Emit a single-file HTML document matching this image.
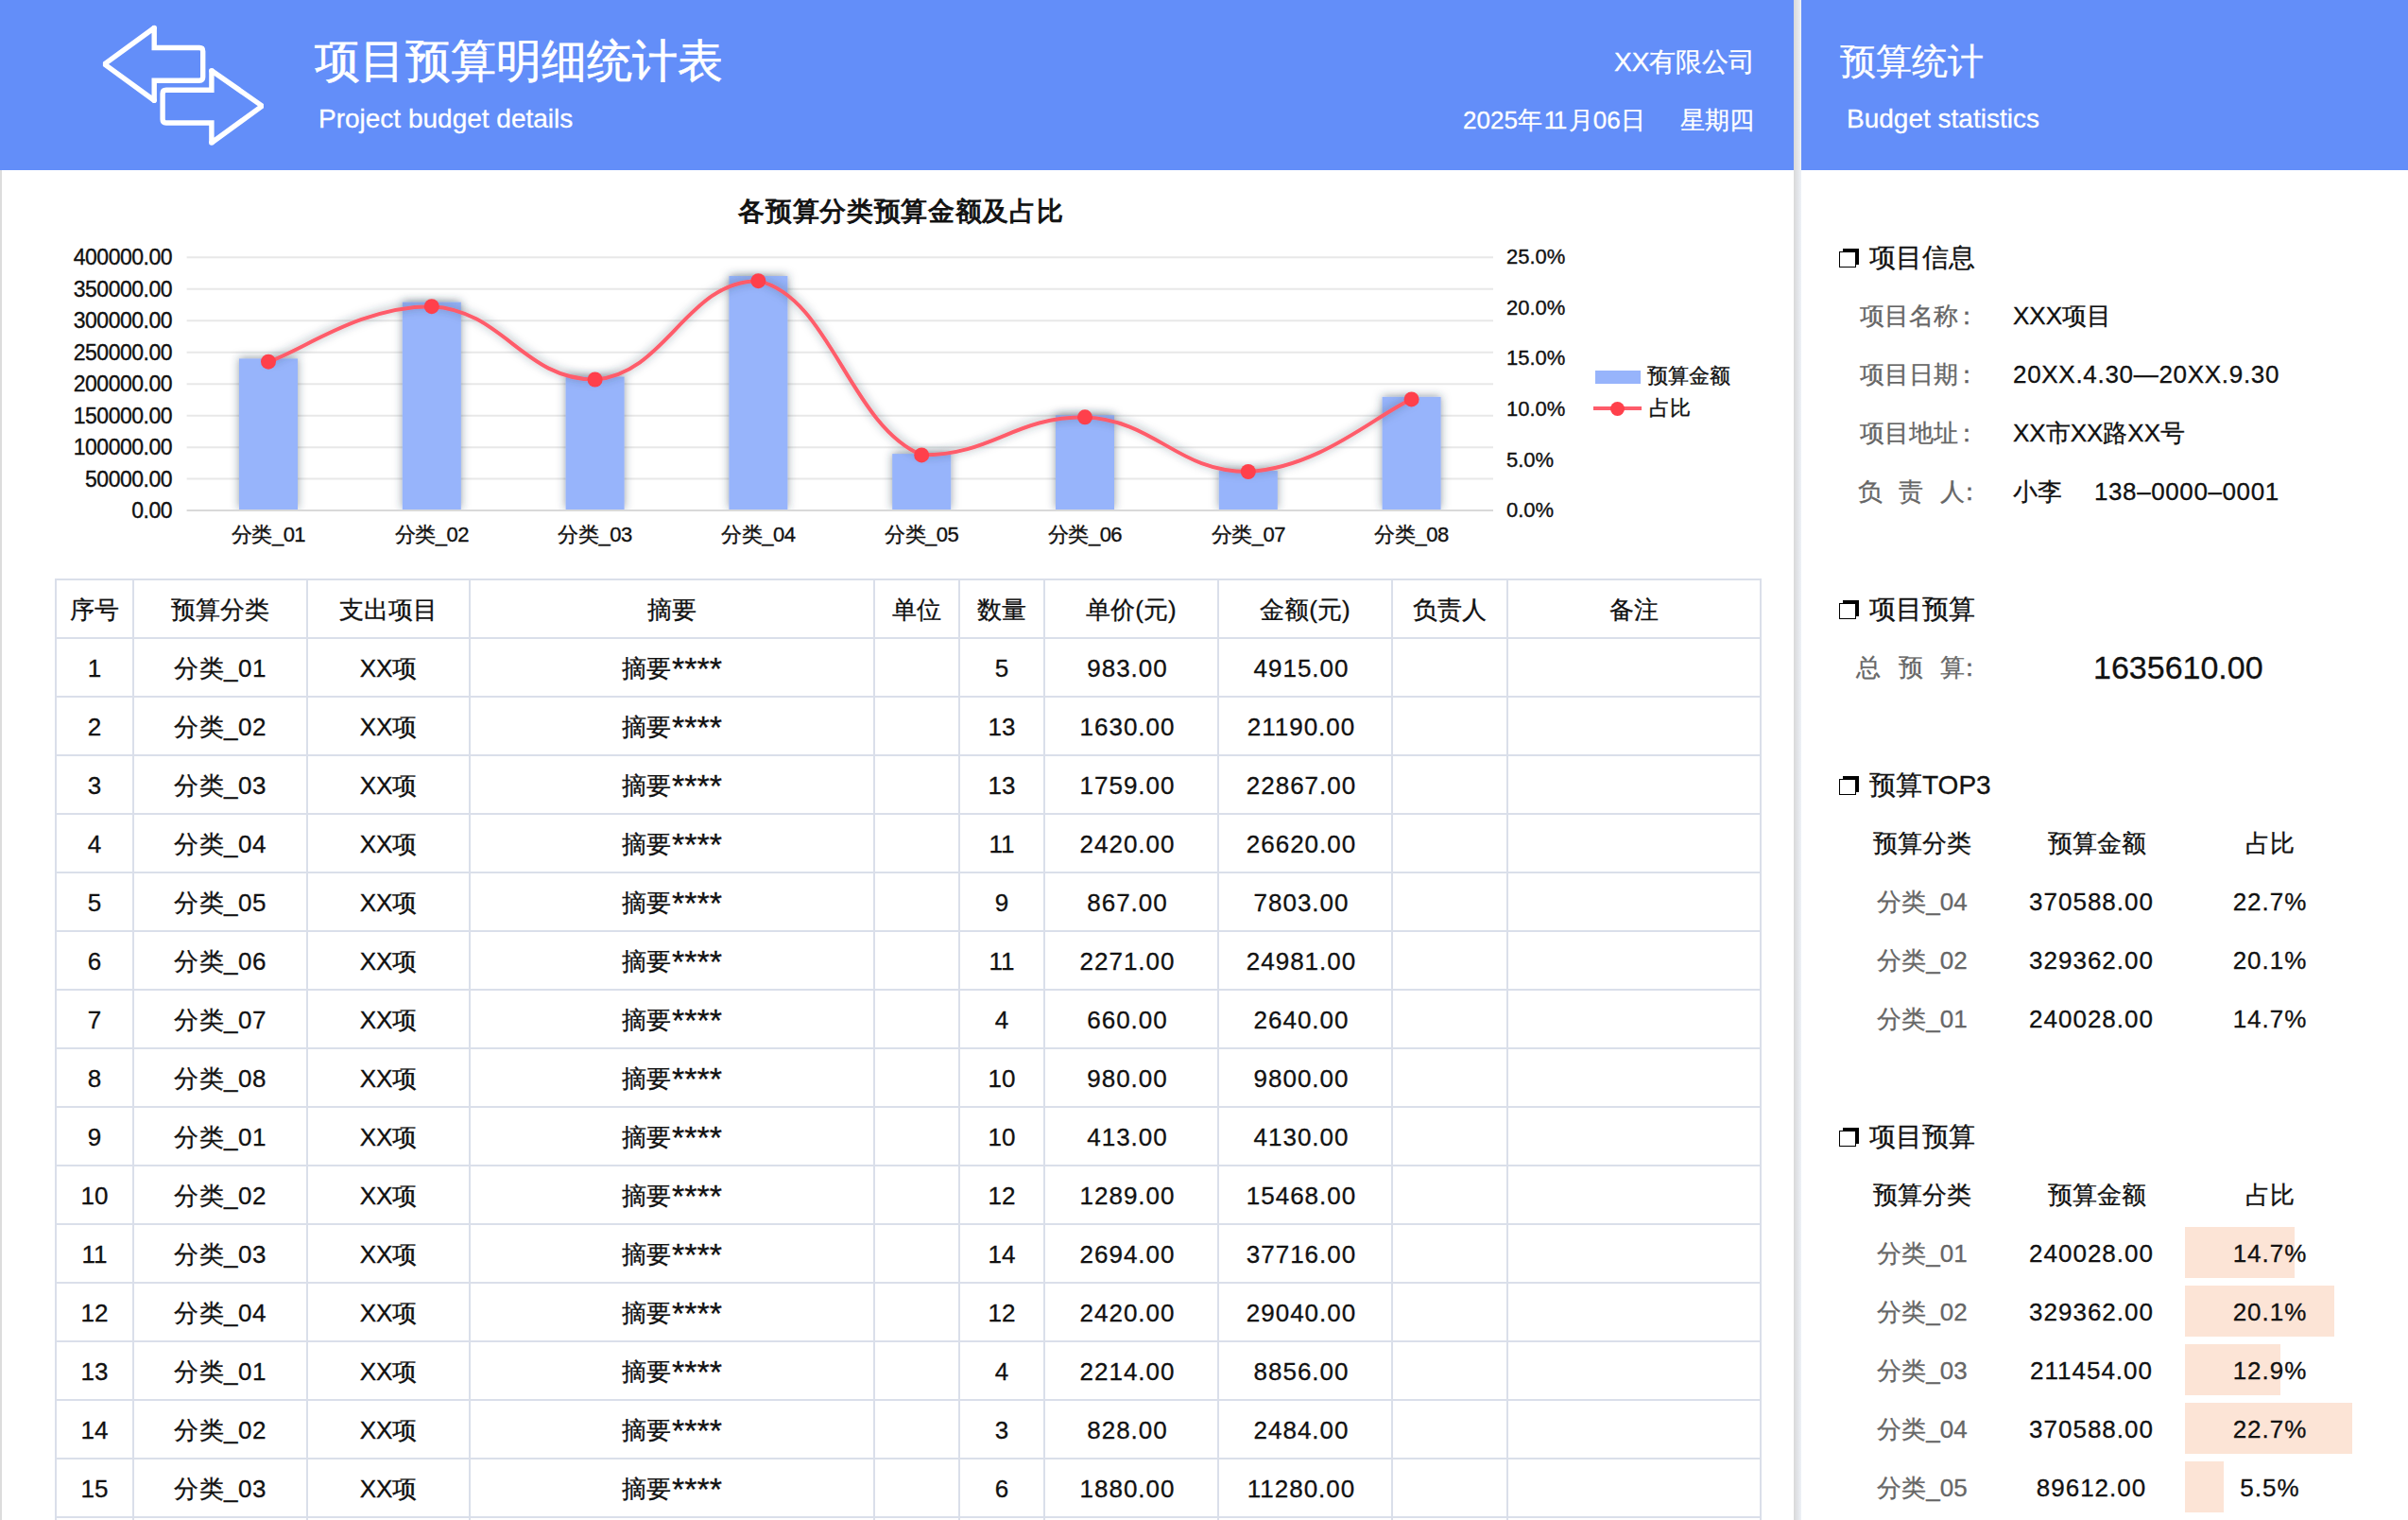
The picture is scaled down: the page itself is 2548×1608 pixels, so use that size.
<!DOCTYPE html><html><head><meta charset="utf-8"><style>
*{margin:0;padding:0;box-sizing:border-box}
html,body{width:2548px;height:1608px;overflow:hidden;background:#fff;font-family:"Liberation Sans", sans-serif;color:#111}
.a{position:absolute;white-space:nowrap}
.c{position:absolute;white-space:nowrap;text-align:center;transform:translateX(-50%)}
.hl{position:absolute;background:#dadfea}
div{-webkit-text-stroke:0.3px currentColor}

</style></head><body>
<div class="a" style="left:0;top:0;width:1898px;height:180px;background:#638ef9"></div>
<div class="a" style="left:1906px;top:0;width:642px;height:180px;background:#638ef9"></div>
<div class="a" style="left:1898px;top:0;width:8px;height:1608px;background:linear-gradient(90deg,#d9d9d9,#e3e5e9 55%,#eef2f8)"></div>
<div class="a" style="left:0;top:180px;width:2px;height:1428px;background:#dcdcdc"></div>
<svg class="a" style="left:0;top:0" width="300" height="180" viewBox="0 0 300 180">
<g fill="none" stroke="#fff" stroke-width="5.4" stroke-linejoin="miter" stroke-miterlimit="1.5">
<path d="M110.5,67.9 L163.2,29.5 L163.2,50.5 L211,50.5 Q214.7,50.5 214.7,54.2 L214.7,81.6 Q214.7,85.3 211,85.3 L163.2,85.3 L163.2,106.3 Z"/>
<path d="M277.4,112.1 L223.9,74.7 L223.9,95.3 L175.8,95.3 Q172.1,95.3 172.1,99 L172.1,126.3 Q172.1,130 175.8,130 L223.9,130 L223.9,151 Z"/>
</g><g fill="#fff"><circle cx="163.2" cy="29.5" r="2.8"/><circle cx="163.2" cy="106.3" r="2.8"/><circle cx="223.9" cy="74.7" r="2.8"/><circle cx="223.9" cy="151" r="2.8"/></g></svg>
<div class="a" style="left:333px;top:35px;font-size:48px;color:#fff;line-height:60px;-webkit-text-stroke:0.6px #fff">项目预算明细统计表</div>
<div class="a" style="left:337px;top:110px;font-size:28px;color:#fff;line-height:32px">Project budget details</div>
<div class="a" style="left:1708px;top:48px;font-size:28px;color:#fff;line-height:36px">XX有限公司</div>
<div class="a" style="left:1548px;top:109px;font-size:26px;color:#fff;line-height:36px">2025年<span style="letter-spacing:-2.5px;margin-left:2px">11</span><span style="margin-left:4px">月06日</span></div>
<div class="a" style="left:1778px;top:109px;font-size:26px;color:#fff;line-height:36px">星期四</div>
<div class="a" style="left:1947px;top:42px;font-size:38px;color:#fff;line-height:46px">预算统计</div>
<div class="a" style="left:1954px;top:110px;font-size:28px;color:#fff;line-height:32px">Budget statistics</div>
<svg class="a" style="left:0;top:180px" width="1896" height="432" viewBox="0 180 1896 432">
<defs><filter id="sh" x="-30%" y="-30%" width="160%" height="160%"><feDropShadow dx="0" dy="-1" stdDeviation="5" flood-color="#2c3a50" flood-opacity="0.5"/></filter></defs>
<line x1="197.6" x2="1580.0" y1="272.3" y2="272.3" stroke="#e8e8e8" stroke-width="2"/>
<line x1="197.6" x2="1580.0" y1="305.8" y2="305.8" stroke="#e8e8e8" stroke-width="2"/>
<line x1="197.6" x2="1580.0" y1="339.2" y2="339.2" stroke="#e8e8e8" stroke-width="2"/>
<line x1="197.6" x2="1580.0" y1="372.7" y2="372.7" stroke="#e8e8e8" stroke-width="2"/>
<line x1="197.6" x2="1580.0" y1="406.2" y2="406.2" stroke="#e8e8e8" stroke-width="2"/>
<line x1="197.6" x2="1580.0" y1="439.7" y2="439.7" stroke="#e8e8e8" stroke-width="2"/>
<line x1="197.6" x2="1580.0" y1="473.2" y2="473.2" stroke="#e8e8e8" stroke-width="2"/>
<line x1="197.6" x2="1580.0" y1="506.6" y2="506.6" stroke="#e8e8e8" stroke-width="2"/>
<line x1="197.6" x2="1580.0" y1="540.1" y2="540.1" stroke="#d9d9d9" stroke-width="2"/>
<clipPath id="cp"><rect x="0" y="180" width="1896" height="359.1"/></clipPath>
<g clip-path="url(#cp)"><g filter="url(#sh)">
<rect x="253.0" y="379.4" width="62" height="159.7" fill="#97b4fb"/>
<rect x="425.8" y="319.6" width="62" height="219.5" fill="#97b4fb"/>
<rect x="598.6" y="398.5" width="62" height="140.6" fill="#97b4fb"/>
<rect x="771.4" y="292.0" width="62" height="247.1" fill="#97b4fb"/>
<rect x="944.2" y="480.1" width="62" height="59.0" fill="#97b4fb"/>
<rect x="1117.0" y="439.2" width="62" height="99.9" fill="#97b4fb"/>
<rect x="1289.8" y="498.1" width="62" height="41.0" fill="#97b4fb"/>
<rect x="1462.6" y="419.9" width="62" height="119.2" fill="#97b4fb"/>
</g></g>
<path d="M284.00,382.75 C322.02,369.86 380.77,324.18 456.80,324.18 C532.83,328.31 553.57,401.48 629.60,401.48 C705.63,395.53 726.37,297.16 802.40,297.16 C878.43,314.73 899.17,449.65 975.20,481.35 C1051.23,481.35 1071.97,441.28 1148.00,441.28 C1224.03,445.16 1244.77,499.01 1320.80,499.01 C1396.83,494.85 1455.58,439.25 1493.60,422.39" fill="none" stroke="#fe5c6a" stroke-width="4" filter="url(#sh)"/>
<circle cx="284.0" cy="382.7" r="8" fill="#ff404b"/>
<circle cx="456.8" cy="324.2" r="8" fill="#ff404b"/>
<circle cx="629.6" cy="401.5" r="8" fill="#ff404b"/>
<circle cx="802.4" cy="297.2" r="8" fill="#ff404b"/>
<circle cx="975.2" cy="481.4" r="8" fill="#ff404b"/>
<circle cx="1148.0" cy="441.3" r="8" fill="#ff404b"/>
<circle cx="1320.8" cy="499.0" r="8" fill="#ff404b"/>
<circle cx="1493.6" cy="422.4" r="8" fill="#ff404b"/>
</svg>
<div class="c" style="left:953px;top:207px;font-size:28px;font-weight:normal;line-height:34px;color:#111;-webkit-text-stroke:1px #111;letter-spacing:0.7px;text-indent:0.7px">各预算分类预算金额及占比</div>
<div class="a" style="left:0;width:182px;text-align:right;top:259.3px;font-size:23px;line-height:26px;color:#111;letter-spacing:-0.5px;-webkit-text-stroke:0.35px #111">400000.00</div>
<div class="a" style="left:0;width:182px;text-align:right;top:292.8px;font-size:23px;line-height:26px;color:#111;letter-spacing:-0.5px;-webkit-text-stroke:0.35px #111">350000.00</div>
<div class="a" style="left:0;width:182px;text-align:right;top:326.2px;font-size:23px;line-height:26px;color:#111;letter-spacing:-0.5px;-webkit-text-stroke:0.35px #111">300000.00</div>
<div class="a" style="left:0;width:182px;text-align:right;top:359.7px;font-size:23px;line-height:26px;color:#111;letter-spacing:-0.5px;-webkit-text-stroke:0.35px #111">250000.00</div>
<div class="a" style="left:0;width:182px;text-align:right;top:393.2px;font-size:23px;line-height:26px;color:#111;letter-spacing:-0.5px;-webkit-text-stroke:0.35px #111">200000.00</div>
<div class="a" style="left:0;width:182px;text-align:right;top:426.7px;font-size:23px;line-height:26px;color:#111;letter-spacing:-0.5px;-webkit-text-stroke:0.35px #111">150000.00</div>
<div class="a" style="left:0;width:182px;text-align:right;top:460.2px;font-size:23px;line-height:26px;color:#111;letter-spacing:-0.5px;-webkit-text-stroke:0.35px #111">100000.00</div>
<div class="a" style="left:0;width:182px;text-align:right;top:493.6px;font-size:23px;line-height:26px;color:#111;letter-spacing:-0.5px;-webkit-text-stroke:0.35px #111">50000.00</div>
<div class="a" style="left:0;width:182px;text-align:right;top:527.1px;font-size:23px;line-height:26px;color:#111;letter-spacing:-0.5px;-webkit-text-stroke:0.35px #111">0.00</div>
<div class="a" style="left:1594px;top:259.3px;font-size:22px;line-height:26px;color:#111;-webkit-text-stroke:0.35px #111">25.0%</div>
<div class="a" style="left:1594px;top:312.9px;font-size:22px;line-height:26px;color:#111;-webkit-text-stroke:0.35px #111">20.0%</div>
<div class="a" style="left:1594px;top:366.4px;font-size:22px;line-height:26px;color:#111;-webkit-text-stroke:0.35px #111">15.0%</div>
<div class="a" style="left:1594px;top:420.0px;font-size:22px;line-height:26px;color:#111;-webkit-text-stroke:0.35px #111">10.0%</div>
<div class="a" style="left:1594px;top:473.5px;font-size:22px;line-height:26px;color:#111;-webkit-text-stroke:0.35px #111">5.0%</div>
<div class="a" style="left:1594px;top:527.1px;font-size:22px;line-height:26px;color:#111;-webkit-text-stroke:0.35px #111">0.0%</div>
<div class="c" style="left:284.0px;top:553px;font-size:22px;line-height:26px;color:#111;letter-spacing:-0.5px;-webkit-text-stroke:0.35px #111">分类_01</div>
<div class="c" style="left:456.8px;top:553px;font-size:22px;line-height:26px;color:#111;letter-spacing:-0.5px;-webkit-text-stroke:0.35px #111">分类_02</div>
<div class="c" style="left:629.6px;top:553px;font-size:22px;line-height:26px;color:#111;letter-spacing:-0.5px;-webkit-text-stroke:0.35px #111">分类_03</div>
<div class="c" style="left:802.4px;top:553px;font-size:22px;line-height:26px;color:#111;letter-spacing:-0.5px;-webkit-text-stroke:0.35px #111">分类_04</div>
<div class="c" style="left:975.2px;top:553px;font-size:22px;line-height:26px;color:#111;letter-spacing:-0.5px;-webkit-text-stroke:0.35px #111">分类_05</div>
<div class="c" style="left:1148.0px;top:553px;font-size:22px;line-height:26px;color:#111;letter-spacing:-0.5px;-webkit-text-stroke:0.35px #111">分类_06</div>
<div class="c" style="left:1320.8px;top:553px;font-size:22px;line-height:26px;color:#111;letter-spacing:-0.5px;-webkit-text-stroke:0.35px #111">分类_07</div>
<div class="c" style="left:1493.6px;top:553px;font-size:22px;line-height:26px;color:#111;letter-spacing:-0.5px;-webkit-text-stroke:0.35px #111">分类_08</div>
<div class="a" style="left:1688px;top:392px;width:48px;height:14px;background:#97b4fb"></div>
<div class="a" style="left:1743px;top:385px;font-size:22px;line-height:26px;color:#111;-webkit-text-stroke:0.35px #111">预算金额</div>
<div class="a" style="left:1686px;top:430px;width:51px;height:4px;background:#fe5c6a"></div>
<div class="a" style="left:1703.5px;top:424.5px;width:15px;height:15px;border-radius:50%;background:#ff404b"></div>
<div class="a" style="left:1745px;top:419px;font-size:22px;line-height:26px;color:#111;-webkit-text-stroke:0.35px #111">占比</div>
<div class="hl" style="left:58px;top:612px;width:2px;height:996px"></div>
<div class="hl" style="left:140px;top:612px;width:2px;height:996px"></div>
<div class="hl" style="left:324px;top:612px;width:2px;height:996px"></div>
<div class="hl" style="left:496px;top:612px;width:2px;height:996px"></div>
<div class="hl" style="left:924px;top:612px;width:2px;height:996px"></div>
<div class="hl" style="left:1014px;top:612px;width:2px;height:996px"></div>
<div class="hl" style="left:1104px;top:612px;width:2px;height:996px"></div>
<div class="hl" style="left:1288px;top:612px;width:2px;height:996px"></div>
<div class="hl" style="left:1472px;top:612px;width:2px;height:996px"></div>
<div class="hl" style="left:1594px;top:612px;width:2px;height:996px"></div>
<div class="hl" style="left:1862px;top:612px;width:2px;height:996px"></div>
<div class="hl" style="left:58px;top:612px;width:1806px;height:2px"></div>
<div class="hl" style="left:58px;top:674px;width:1806px;height:2px"></div>
<div class="hl" style="left:58px;top:736px;width:1806px;height:2px"></div>
<div class="hl" style="left:58px;top:798px;width:1806px;height:2px"></div>
<div class="hl" style="left:58px;top:860px;width:1806px;height:2px"></div>
<div class="hl" style="left:58px;top:922px;width:1806px;height:2px"></div>
<div class="hl" style="left:58px;top:984px;width:1806px;height:2px"></div>
<div class="hl" style="left:58px;top:1046px;width:1806px;height:2px"></div>
<div class="hl" style="left:58px;top:1108px;width:1806px;height:2px"></div>
<div class="hl" style="left:58px;top:1170px;width:1806px;height:2px"></div>
<div class="hl" style="left:58px;top:1232px;width:1806px;height:2px"></div>
<div class="hl" style="left:58px;top:1294px;width:1806px;height:2px"></div>
<div class="hl" style="left:58px;top:1356px;width:1806px;height:2px"></div>
<div class="hl" style="left:58px;top:1418px;width:1806px;height:2px"></div>
<div class="hl" style="left:58px;top:1480px;width:1806px;height:2px"></div>
<div class="hl" style="left:58px;top:1542px;width:1806px;height:2px"></div>
<div class="hl" style="left:58px;top:1604px;width:1806px;height:2px"></div>
<div class="c t" style="left:100.0px;top:630px;font-size:26px;line-height:30px;">序号</div>
<div class="c t" style="left:233.0px;top:630px;font-size:26px;line-height:30px;">预算分类</div>
<div class="c t" style="left:411.0px;top:630px;font-size:26px;line-height:30px;">支出项目</div>
<div class="c t" style="left:711.0px;top:630px;font-size:26px;line-height:30px;">摘要</div>
<div class="c t" style="left:970.0px;top:630px;font-size:26px;line-height:30px;">单位</div>
<div class="c t" style="left:1060.0px;top:630px;font-size:26px;line-height:30px;">数量</div>
<div class="c t" style="left:1197.0px;top:630px;font-size:26px;line-height:30px;">单价(元)</div>
<div class="c t" style="left:1381.0px;top:630px;font-size:26px;line-height:30px;">金额(元)</div>
<div class="c t" style="left:1534.0px;top:630px;font-size:26px;line-height:30px;">负责人</div>
<div class="c t" style="left:1729.0px;top:630px;font-size:26px;line-height:30px;">备注</div>
<div class="c t" style="left:100.0px;top:692px;font-size:26px;line-height:30px;">1</div>
<div class="c t" style="left:233.0px;top:692px;font-size:26px;line-height:30px;letter-spacing:0.5px">分类_01</div>
<div class="c t" style="left:411.0px;top:692px;font-size:26px;line-height:30px;">XX项</div>
<div class="c t" style="left:711.0px;top:692px;font-size:26px;line-height:30px;">摘要<span style="font-size:34px;line-height:0;position:relative;top:3px;margin-left:1px">****</span></div>
<div class="c t" style="left:1060.0px;top:692px;font-size:26px;line-height:30px;">5</div>
<div class="c t" style="left:1197.0px;top:692px;font-size:26px;line-height:30px;letter-spacing:1px;padding-right:8px">983.00</div>
<div class="c t" style="left:1381.0px;top:692px;font-size:26px;line-height:30px;letter-spacing:1px;padding-right:8px">4915.00</div>
<div class="c t" style="left:100.0px;top:754px;font-size:26px;line-height:30px;">2</div>
<div class="c t" style="left:233.0px;top:754px;font-size:26px;line-height:30px;letter-spacing:0.5px">分类_02</div>
<div class="c t" style="left:411.0px;top:754px;font-size:26px;line-height:30px;">XX项</div>
<div class="c t" style="left:711.0px;top:754px;font-size:26px;line-height:30px;">摘要<span style="font-size:34px;line-height:0;position:relative;top:3px;margin-left:1px">****</span></div>
<div class="c t" style="left:1060.0px;top:754px;font-size:26px;line-height:30px;">13</div>
<div class="c t" style="left:1197.0px;top:754px;font-size:26px;line-height:30px;letter-spacing:1px;padding-right:8px">1630.00</div>
<div class="c t" style="left:1381.0px;top:754px;font-size:26px;line-height:30px;letter-spacing:1px;padding-right:8px">21190.00</div>
<div class="c t" style="left:100.0px;top:816px;font-size:26px;line-height:30px;">3</div>
<div class="c t" style="left:233.0px;top:816px;font-size:26px;line-height:30px;letter-spacing:0.5px">分类_03</div>
<div class="c t" style="left:411.0px;top:816px;font-size:26px;line-height:30px;">XX项</div>
<div class="c t" style="left:711.0px;top:816px;font-size:26px;line-height:30px;">摘要<span style="font-size:34px;line-height:0;position:relative;top:3px;margin-left:1px">****</span></div>
<div class="c t" style="left:1060.0px;top:816px;font-size:26px;line-height:30px;">13</div>
<div class="c t" style="left:1197.0px;top:816px;font-size:26px;line-height:30px;letter-spacing:1px;padding-right:8px">1759.00</div>
<div class="c t" style="left:1381.0px;top:816px;font-size:26px;line-height:30px;letter-spacing:1px;padding-right:8px">22867.00</div>
<div class="c t" style="left:100.0px;top:878px;font-size:26px;line-height:30px;">4</div>
<div class="c t" style="left:233.0px;top:878px;font-size:26px;line-height:30px;letter-spacing:0.5px">分类_04</div>
<div class="c t" style="left:411.0px;top:878px;font-size:26px;line-height:30px;">XX项</div>
<div class="c t" style="left:711.0px;top:878px;font-size:26px;line-height:30px;">摘要<span style="font-size:34px;line-height:0;position:relative;top:3px;margin-left:1px">****</span></div>
<div class="c t" style="left:1060.0px;top:878px;font-size:26px;line-height:30px;">11</div>
<div class="c t" style="left:1197.0px;top:878px;font-size:26px;line-height:30px;letter-spacing:1px;padding-right:8px">2420.00</div>
<div class="c t" style="left:1381.0px;top:878px;font-size:26px;line-height:30px;letter-spacing:1px;padding-right:8px">26620.00</div>
<div class="c t" style="left:100.0px;top:940px;font-size:26px;line-height:30px;">5</div>
<div class="c t" style="left:233.0px;top:940px;font-size:26px;line-height:30px;letter-spacing:0.5px">分类_05</div>
<div class="c t" style="left:411.0px;top:940px;font-size:26px;line-height:30px;">XX项</div>
<div class="c t" style="left:711.0px;top:940px;font-size:26px;line-height:30px;">摘要<span style="font-size:34px;line-height:0;position:relative;top:3px;margin-left:1px">****</span></div>
<div class="c t" style="left:1060.0px;top:940px;font-size:26px;line-height:30px;">9</div>
<div class="c t" style="left:1197.0px;top:940px;font-size:26px;line-height:30px;letter-spacing:1px;padding-right:8px">867.00</div>
<div class="c t" style="left:1381.0px;top:940px;font-size:26px;line-height:30px;letter-spacing:1px;padding-right:8px">7803.00</div>
<div class="c t" style="left:100.0px;top:1002px;font-size:26px;line-height:30px;">6</div>
<div class="c t" style="left:233.0px;top:1002px;font-size:26px;line-height:30px;letter-spacing:0.5px">分类_06</div>
<div class="c t" style="left:411.0px;top:1002px;font-size:26px;line-height:30px;">XX项</div>
<div class="c t" style="left:711.0px;top:1002px;font-size:26px;line-height:30px;">摘要<span style="font-size:34px;line-height:0;position:relative;top:3px;margin-left:1px">****</span></div>
<div class="c t" style="left:1060.0px;top:1002px;font-size:26px;line-height:30px;">11</div>
<div class="c t" style="left:1197.0px;top:1002px;font-size:26px;line-height:30px;letter-spacing:1px;padding-right:8px">2271.00</div>
<div class="c t" style="left:1381.0px;top:1002px;font-size:26px;line-height:30px;letter-spacing:1px;padding-right:8px">24981.00</div>
<div class="c t" style="left:100.0px;top:1064px;font-size:26px;line-height:30px;">7</div>
<div class="c t" style="left:233.0px;top:1064px;font-size:26px;line-height:30px;letter-spacing:0.5px">分类_07</div>
<div class="c t" style="left:411.0px;top:1064px;font-size:26px;line-height:30px;">XX项</div>
<div class="c t" style="left:711.0px;top:1064px;font-size:26px;line-height:30px;">摘要<span style="font-size:34px;line-height:0;position:relative;top:3px;margin-left:1px">****</span></div>
<div class="c t" style="left:1060.0px;top:1064px;font-size:26px;line-height:30px;">4</div>
<div class="c t" style="left:1197.0px;top:1064px;font-size:26px;line-height:30px;letter-spacing:1px;padding-right:8px">660.00</div>
<div class="c t" style="left:1381.0px;top:1064px;font-size:26px;line-height:30px;letter-spacing:1px;padding-right:8px">2640.00</div>
<div class="c t" style="left:100.0px;top:1126px;font-size:26px;line-height:30px;">8</div>
<div class="c t" style="left:233.0px;top:1126px;font-size:26px;line-height:30px;letter-spacing:0.5px">分类_08</div>
<div class="c t" style="left:411.0px;top:1126px;font-size:26px;line-height:30px;">XX项</div>
<div class="c t" style="left:711.0px;top:1126px;font-size:26px;line-height:30px;">摘要<span style="font-size:34px;line-height:0;position:relative;top:3px;margin-left:1px">****</span></div>
<div class="c t" style="left:1060.0px;top:1126px;font-size:26px;line-height:30px;">10</div>
<div class="c t" style="left:1197.0px;top:1126px;font-size:26px;line-height:30px;letter-spacing:1px;padding-right:8px">980.00</div>
<div class="c t" style="left:1381.0px;top:1126px;font-size:26px;line-height:30px;letter-spacing:1px;padding-right:8px">9800.00</div>
<div class="c t" style="left:100.0px;top:1188px;font-size:26px;line-height:30px;">9</div>
<div class="c t" style="left:233.0px;top:1188px;font-size:26px;line-height:30px;letter-spacing:0.5px">分类_01</div>
<div class="c t" style="left:411.0px;top:1188px;font-size:26px;line-height:30px;">XX项</div>
<div class="c t" style="left:711.0px;top:1188px;font-size:26px;line-height:30px;">摘要<span style="font-size:34px;line-height:0;position:relative;top:3px;margin-left:1px">****</span></div>
<div class="c t" style="left:1060.0px;top:1188px;font-size:26px;line-height:30px;">10</div>
<div class="c t" style="left:1197.0px;top:1188px;font-size:26px;line-height:30px;letter-spacing:1px;padding-right:8px">413.00</div>
<div class="c t" style="left:1381.0px;top:1188px;font-size:26px;line-height:30px;letter-spacing:1px;padding-right:8px">4130.00</div>
<div class="c t" style="left:100.0px;top:1250px;font-size:26px;line-height:30px;">10</div>
<div class="c t" style="left:233.0px;top:1250px;font-size:26px;line-height:30px;letter-spacing:0.5px">分类_02</div>
<div class="c t" style="left:411.0px;top:1250px;font-size:26px;line-height:30px;">XX项</div>
<div class="c t" style="left:711.0px;top:1250px;font-size:26px;line-height:30px;">摘要<span style="font-size:34px;line-height:0;position:relative;top:3px;margin-left:1px">****</span></div>
<div class="c t" style="left:1060.0px;top:1250px;font-size:26px;line-height:30px;">12</div>
<div class="c t" style="left:1197.0px;top:1250px;font-size:26px;line-height:30px;letter-spacing:1px;padding-right:8px">1289.00</div>
<div class="c t" style="left:1381.0px;top:1250px;font-size:26px;line-height:30px;letter-spacing:1px;padding-right:8px">15468.00</div>
<div class="c t" style="left:100.0px;top:1312px;font-size:26px;line-height:30px;">11</div>
<div class="c t" style="left:233.0px;top:1312px;font-size:26px;line-height:30px;letter-spacing:0.5px">分类_03</div>
<div class="c t" style="left:411.0px;top:1312px;font-size:26px;line-height:30px;">XX项</div>
<div class="c t" style="left:711.0px;top:1312px;font-size:26px;line-height:30px;">摘要<span style="font-size:34px;line-height:0;position:relative;top:3px;margin-left:1px">****</span></div>
<div class="c t" style="left:1060.0px;top:1312px;font-size:26px;line-height:30px;">14</div>
<div class="c t" style="left:1197.0px;top:1312px;font-size:26px;line-height:30px;letter-spacing:1px;padding-right:8px">2694.00</div>
<div class="c t" style="left:1381.0px;top:1312px;font-size:26px;line-height:30px;letter-spacing:1px;padding-right:8px">37716.00</div>
<div class="c t" style="left:100.0px;top:1374px;font-size:26px;line-height:30px;">12</div>
<div class="c t" style="left:233.0px;top:1374px;font-size:26px;line-height:30px;letter-spacing:0.5px">分类_04</div>
<div class="c t" style="left:411.0px;top:1374px;font-size:26px;line-height:30px;">XX项</div>
<div class="c t" style="left:711.0px;top:1374px;font-size:26px;line-height:30px;">摘要<span style="font-size:34px;line-height:0;position:relative;top:3px;margin-left:1px">****</span></div>
<div class="c t" style="left:1060.0px;top:1374px;font-size:26px;line-height:30px;">12</div>
<div class="c t" style="left:1197.0px;top:1374px;font-size:26px;line-height:30px;letter-spacing:1px;padding-right:8px">2420.00</div>
<div class="c t" style="left:1381.0px;top:1374px;font-size:26px;line-height:30px;letter-spacing:1px;padding-right:8px">29040.00</div>
<div class="c t" style="left:100.0px;top:1436px;font-size:26px;line-height:30px;">13</div>
<div class="c t" style="left:233.0px;top:1436px;font-size:26px;line-height:30px;letter-spacing:0.5px">分类_01</div>
<div class="c t" style="left:411.0px;top:1436px;font-size:26px;line-height:30px;">XX项</div>
<div class="c t" style="left:711.0px;top:1436px;font-size:26px;line-height:30px;">摘要<span style="font-size:34px;line-height:0;position:relative;top:3px;margin-left:1px">****</span></div>
<div class="c t" style="left:1060.0px;top:1436px;font-size:26px;line-height:30px;">4</div>
<div class="c t" style="left:1197.0px;top:1436px;font-size:26px;line-height:30px;letter-spacing:1px;padding-right:8px">2214.00</div>
<div class="c t" style="left:1381.0px;top:1436px;font-size:26px;line-height:30px;letter-spacing:1px;padding-right:8px">8856.00</div>
<div class="c t" style="left:100.0px;top:1498px;font-size:26px;line-height:30px;">14</div>
<div class="c t" style="left:233.0px;top:1498px;font-size:26px;line-height:30px;letter-spacing:0.5px">分类_02</div>
<div class="c t" style="left:411.0px;top:1498px;font-size:26px;line-height:30px;">XX项</div>
<div class="c t" style="left:711.0px;top:1498px;font-size:26px;line-height:30px;">摘要<span style="font-size:34px;line-height:0;position:relative;top:3px;margin-left:1px">****</span></div>
<div class="c t" style="left:1060.0px;top:1498px;font-size:26px;line-height:30px;">3</div>
<div class="c t" style="left:1197.0px;top:1498px;font-size:26px;line-height:30px;letter-spacing:1px;padding-right:8px">828.00</div>
<div class="c t" style="left:1381.0px;top:1498px;font-size:26px;line-height:30px;letter-spacing:1px;padding-right:8px">2484.00</div>
<div class="c t" style="left:100.0px;top:1560px;font-size:26px;line-height:30px;">15</div>
<div class="c t" style="left:233.0px;top:1560px;font-size:26px;line-height:30px;letter-spacing:0.5px">分类_03</div>
<div class="c t" style="left:411.0px;top:1560px;font-size:26px;line-height:30px;">XX项</div>
<div class="c t" style="left:711.0px;top:1560px;font-size:26px;line-height:30px;">摘要<span style="font-size:34px;line-height:0;position:relative;top:3px;margin-left:1px">****</span></div>
<div class="c t" style="left:1060.0px;top:1560px;font-size:26px;line-height:30px;">6</div>
<div class="c t" style="left:1197.0px;top:1560px;font-size:26px;line-height:30px;letter-spacing:1px;padding-right:8px">1880.00</div>
<div class="c t" style="left:1381.0px;top:1560px;font-size:26px;line-height:30px;letter-spacing:1px;padding-right:8px">11280.00</div>
<div class="a" style="left:1950px;top:262.5px;width:17px;height:17px;background:#000"></div>
<div class="a" style="left:1946px;top:265.5px;width:17.5px;height:17px;background:#fff;border:1.6px solid #000"></div>
<div class="a" style="left:1978px;top:256px;font-size:28px;line-height:34px;color:#111">项目信息</div>
<div class="a" style="left:1968px;top:319px;font-size:26px;line-height:30px;color:#666">项目名称</div>
<div class="a" style="left:2068px;top:319px;font-size:26px;line-height:30px;color:#666">：</div>
<div class="a" style="left:2130px;top:319px;font-size:26px;line-height:30px;color:#111">XXX项目</div>
<div class="a" style="left:1968px;top:381px;font-size:26px;line-height:30px;color:#666">项目日期</div>
<div class="a" style="left:2068px;top:381px;font-size:26px;line-height:30px;color:#666">：</div>
<div class="a" style="left:2130px;top:381px;font-size:26px;line-height:30px;color:#111"><span style="letter-spacing:0.7px">20XX.4.30—20XX.9.30</span></div>
<div class="a" style="left:1968px;top:443px;font-size:26px;line-height:30px;color:#666">项目地址</div>
<div class="a" style="left:2068px;top:443px;font-size:26px;line-height:30px;color:#666">：</div>
<div class="a" style="left:2130px;top:443px;font-size:26px;line-height:30px;color:#111">XX市XX路XX号</div>
<div class="a" style="left:1966.0px;top:505px;font-size:26px;line-height:30px;color:#666">负</div>
<div class="a" style="left:2008.5px;top:505px;font-size:26px;line-height:30px;color:#666">责</div>
<div class="a" style="left:2052.5px;top:505px;font-size:26px;line-height:30px;color:#666">人</div>
<div class="a" style="left:2071.0px;top:505px;font-size:26px;line-height:30px;color:#666">：</div>
<div class="a" style="left:2130px;top:505px;font-size:26px;line-height:30px;color:#111">小李<span style="position:absolute;left:86px;letter-spacing:0.6px">138–0000–0001</span></div>
<div class="a" style="left:1950px;top:634.5px;width:17px;height:17px;background:#000"></div>
<div class="a" style="left:1946px;top:637.5px;width:17.5px;height:17px;background:#fff;border:1.6px solid #000"></div>
<div class="a" style="left:1978px;top:628px;font-size:28px;line-height:34px;color:#111">项目预算</div>
<div class="a" style="left:1964.0px;top:691px;font-size:26px;line-height:30px;color:#666">总</div>
<div class="a" style="left:2008.5px;top:691px;font-size:26px;line-height:30px;color:#666">预</div>
<div class="a" style="left:2053.0px;top:691px;font-size:26px;line-height:30px;color:#666">算</div>
<div class="a" style="left:2071.0px;top:691px;font-size:26px;line-height:30px;color:#666">：</div>
<div class="a" style="left:2215px;top:686px;font-size:34px;line-height:40px;color:#111">1635610.00</div>
<div class="a" style="left:1950px;top:820.5px;width:17px;height:17px;background:#000"></div>
<div class="a" style="left:1946px;top:823.5px;width:17.5px;height:17px;background:#fff;border:1.6px solid #000"></div>
<div class="a" style="left:1978px;top:814px;font-size:28px;line-height:34px;color:#111">预算TOP3</div>
<div class="c" style="left:2034px;top:877px;font-size:26px;line-height:30px;color:#111">预算分类</div>
<div class="c" style="left:2219px;top:877px;font-size:26px;line-height:30px;color:#111;">预算金额</div>
<div class="c" style="left:2402px;top:877px;font-size:26px;line-height:30px;color:#111;">占比</div>
<div class="c" style="left:2034px;top:939px;font-size:26px;line-height:30px;color:#666">分类_04</div>
<div class="c" style="left:2213px;top:939px;font-size:26px;line-height:30px;color:#111;letter-spacing:1px">370588.00</div>
<div class="c" style="left:2402px;top:939px;font-size:26px;line-height:30px;color:#111;letter-spacing:1px">22.7%</div>
<div class="c" style="left:2034px;top:1001px;font-size:26px;line-height:30px;color:#666">分类_02</div>
<div class="c" style="left:2213px;top:1001px;font-size:26px;line-height:30px;color:#111;letter-spacing:1px">329362.00</div>
<div class="c" style="left:2402px;top:1001px;font-size:26px;line-height:30px;color:#111;letter-spacing:1px">20.1%</div>
<div class="c" style="left:2034px;top:1063px;font-size:26px;line-height:30px;color:#666">分类_01</div>
<div class="c" style="left:2213px;top:1063px;font-size:26px;line-height:30px;color:#111;letter-spacing:1px">240028.00</div>
<div class="c" style="left:2402px;top:1063px;font-size:26px;line-height:30px;color:#111;letter-spacing:1px">14.7%</div>
<div class="a" style="left:1950px;top:1192.5px;width:17px;height:17px;background:#000"></div>
<div class="a" style="left:1946px;top:1195.5px;width:17.5px;height:17px;background:#fff;border:1.6px solid #000"></div>
<div class="a" style="left:1978px;top:1186px;font-size:28px;line-height:34px;color:#111">项目预算</div>
<div class="c" style="left:2034px;top:1249px;font-size:26px;line-height:30px;color:#111">预算分类</div>
<div class="c" style="left:2219px;top:1249px;font-size:26px;line-height:30px;color:#111;">预算金额</div>
<div class="c" style="left:2402px;top:1249px;font-size:26px;line-height:30px;color:#111;">占比</div>
<div class="a" style="left:2312px;top:1298px;width:115.5px;height:54px;background:#fce4d6"></div>
<div class="c" style="left:2034px;top:1311px;font-size:26px;line-height:30px;color:#666">分类_01</div>
<div class="c" style="left:2213px;top:1311px;font-size:26px;line-height:30px;color:#111;letter-spacing:1px">240028.00</div>
<div class="c" style="left:2402px;top:1311px;font-size:26px;line-height:30px;color:#111;letter-spacing:1px">14.7%</div>
<div class="a" style="left:2312px;top:1360px;width:157.7px;height:54px;background:#fce4d6"></div>
<div class="c" style="left:2034px;top:1373px;font-size:26px;line-height:30px;color:#666">分类_02</div>
<div class="c" style="left:2213px;top:1373px;font-size:26px;line-height:30px;color:#111;letter-spacing:1px">329362.00</div>
<div class="c" style="left:2402px;top:1373px;font-size:26px;line-height:30px;color:#111;letter-spacing:1px">20.1%</div>
<div class="a" style="left:2312px;top:1422px;width:101.4px;height:54px;background:#fce4d6"></div>
<div class="c" style="left:2034px;top:1435px;font-size:26px;line-height:30px;color:#666">分类_03</div>
<div class="c" style="left:2213px;top:1435px;font-size:26px;line-height:30px;color:#111;letter-spacing:1px">211454.00</div>
<div class="c" style="left:2402px;top:1435px;font-size:26px;line-height:30px;color:#111;letter-spacing:1px">12.9%</div>
<div class="a" style="left:2312px;top:1484px;width:177.4px;height:54px;background:#fce4d6"></div>
<div class="c" style="left:2034px;top:1497px;font-size:26px;line-height:30px;color:#666">分类_04</div>
<div class="c" style="left:2213px;top:1497px;font-size:26px;line-height:30px;color:#111;letter-spacing:1px">370588.00</div>
<div class="c" style="left:2402px;top:1497px;font-size:26px;line-height:30px;color:#111;letter-spacing:1px">22.7%</div>
<div class="a" style="left:2312px;top:1546px;width:41.3px;height:54px;background:#fce4d6"></div>
<div class="c" style="left:2034px;top:1559px;font-size:26px;line-height:30px;color:#666">分类_05</div>
<div class="c" style="left:2213px;top:1559px;font-size:26px;line-height:30px;color:#111;letter-spacing:1px">89612.00</div>
<div class="c" style="left:2402px;top:1559px;font-size:26px;line-height:30px;color:#111;letter-spacing:1px">5.5%</div>
</body></html>
